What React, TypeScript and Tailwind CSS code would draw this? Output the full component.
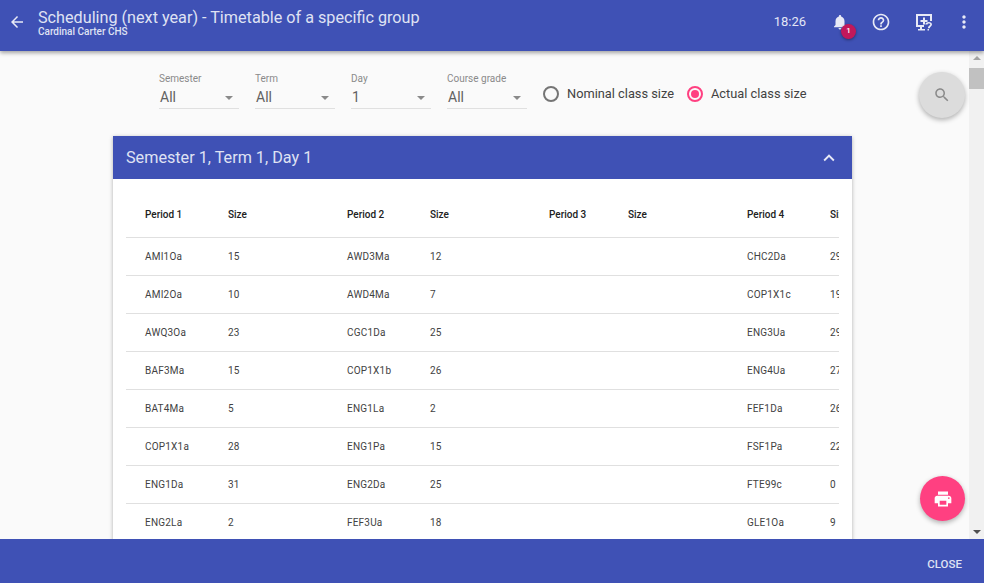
import { ReactNode } from 'react';

const rows = [
  ['AMI1Oa', '15', 'AWD3Ma', '12', 'CHC2Da', '29'],
  ['AMI2Oa', '10', 'AWD4Ma', '7', 'COP1X1c', '19'],
  ['AWQ3Oa', '23', 'CGC1Da', '25', 'ENG3Ua', '29'],
  ['BAF3Ma', '15', 'COP1X1b', '26', 'ENG4Ua', '27'],
  ['BAT4Ma', '5', 'ENG1La', '2', 'FEF1Da', '26'],
  ['COP1X1a', '28', 'ENG1Pa', '15', 'FSF1Pa', '22'],
  ['ENG1Da', '31', 'ENG2Da', '25', 'FTE99c', '0'],
  ['ENG2La', '2', 'FEF3Ua', '18', 'GLE1Oa', '9'],
  ['ENG2Pa', '20', 'FIF1Da', '24', 'GLS1Oa', '12'],
];

const filters = [
  { label: 'Semester', value: 'All' },
  { label: 'Term', value: 'All' },
  { label: 'Day', value: '1' },
  { label: 'Course grade', value: 'All' },
];

function Icon({ d, className }: { d: string; className: string }) {
  return (
    <svg viewBox="0 0 24 24" fill="currentColor" className={className}>
      <path d={d} />
    </svg>
  );
}

function Cell({ w, children, head }: { w: string; children?: ReactNode; head?: boolean }) {
  return (
    <div className={`${w} shrink-0 pl-[19px] ${head ? 'font-medium text-[#212121]' : 'tracking-[0.2px] text-[#424242]'}`}>
      {children}
    </div>
  );
}

function Row({ cells, head }: { cells: string[]; head?: boolean }) {
  return (
    <div className={`flex w-[800px] items-center border-b border-[#e0e0e0] text-[10px] ${head ? 'h-[59px] pt-[12px]' : 'h-[38px]'}`}>
      <Cell w="w-[83px]" head={head}>{cells[0]}</Cell>
      <Cell w="w-[119px]" head={head}>{cells[1]}</Cell>
      <Cell w="w-[83px]" head={head}>{cells[2]}</Cell>
      <Cell w="w-[119px]" head={head}>{cells[3]}</Cell>
      <Cell w="w-[79px]" head={head}>{head ? 'Period 3' : ''}</Cell>
      <Cell w="w-[119px]" head={head}>{head ? 'Size' : ''}</Cell>
      <Cell w="w-[83px]" head={head}>{cells[4]}</Cell>
      <Cell w="w-[115px]" head={head}>{cells[5]}</Cell>
    </div>
  );
}

export default function App() {
  return (
    <div className="relative flex h-[583px] w-[984px] flex-col overflow-hidden bg-[#fafafa] font-['Roboto',sans-serif]">
      <header className="relative z-10 flex h-[51px] shrink-0 items-center bg-[#3f51b5] pr-[10px] text-white shadow-[0_2px_4px_rgba(0,0,0,0.35)]">
        <Icon d="M20 11H7.83l5.59-5.59L12 4l-8 8 8 8 1.41-1.41L7.83 13H20v-2z" className="ml-[8px] mb-[8px] h-[18px] w-[18px] text-[#e8eaf6]" />
        <div className="ml-[12px] mb-[7px] flex-1 text-[#dfe2f3]">
          <div className="text-[16.2px] leading-[20px]">Scheduling (next year) - Timetable of a specific group</div>
          <div className="-mt-[1px] text-[10px] font-medium leading-[9px]">Cardinal Carter CHS</div>
        </div>
        <span className="mr-[25px] mb-[7px] text-[13px] text-[#e3e6f5]">18:26</span>
        <div className="relative mr-[22px] mb-[8px]">
          <Icon d="M12 22c1.1 0 2-.9 2-2h-4c0 1.1.89 2 2 2zm6-6v-5c0-3.07-1.64-5.64-4.5-6.32V4c0-.83-.67-1.5-1.5-1.5s-1.5.67-1.5 1.5v.68C7.63 5.36 6 7.92 6 11v5l-2 2v1h16v-1l-2-2z" className="h-[18px] w-[18px] text-[#e8eaf6]" />
          <span className="absolute left-[10px] top-[11px] flex h-[15px] w-[15px] items-center justify-center rounded-full bg-[#c2185b] text-[8px] font-medium text-white shadow-[0_1px_3px_rgba(0,0,0,0.4)]">1</span>
        </div>
        <Icon d="M11 18h2v-2h-2v2zm1-16C6.48 2 2 6.48 2 12s4.48 10 10 10 10-4.48 10-10S17.52 2 12 2zm0 18c-4.41 0-8-3.59-8-8s3.59-8 8-8 8 3.59 8 8-3.59 8-8 8zm0-14c-2.21 0-4 1.79-4 4h2c0-1.1.9-2 2-2s2 .9 2 2c0 2-3 1.75-3 5h2c0-2.25 3-2.5 3-5 0-2.21-1.79-4-4-4z" className="mr-[23px] mb-[8px] h-[20px] w-[20px] text-[#e8eaf6]" />
        <svg viewBox="0 0 20 20" className="mr-[20px] mb-[8px] h-[20px] w-[20px] text-[#e8eaf6]" fill="currentColor">
          <path d="M2 2h16v7h-2V4H4v9h6v2H8v2h3v1.500H4V17h2v-2H2z" />
          <path d="M9 5.500h2V8h2.500v2H11v2.500H9V10H6.500V8H9z" />
          <path d="M13.500 17h1.500v1.500h-1.500zM14.800 10c1.900 0 3.200 1 3.200 2.500 0 1.800-2.200 2-2.200 3.700h-1.800c0-2.500 2.200-2.500 2.200-3.700 0-.5-.6-.9-1.300-.9-.8 0-1.300.4-1.300 1H11.300c0-1.500 1.500-2.600 3.500-2.600z" />
        </svg>
        <Icon d="M12 8c1.100 0 2-.9 2-2s-.9-2-2-2-2 .9-2 2 .9 2 2 2zm0 2c-1.100 0-2 .9-2 2s.9 2 2 2 2-.9 2-2-.9-2-2-2zm0 6c-1.100 0-2 .9-2 2s.9 2 2 2 2-.9 2-2-.9-2-2-2z" className="mb-[8px] h-[20px] w-[20px] text-[#e8eaf6]" />
      </header>

      <div className="flex min-h-0 flex-1">
        <main className="min-w-0 flex-1 overflow-hidden">
          <div className="ml-[159px] mt-[22px] flex h-[63px] items-start">
            {filters.map((f) => (
              <div key={f.label} className="mr-[16px] w-[80px] border-b border-[#e0e0e0]">
                <div className="text-[10px] leading-[12px] text-[#8a8a8a]">{f.label}</div>
                <div className="flex h-[23px] items-center pl-[1px] pt-[2px] text-[14px] text-[#616161]">
                  <span className="flex-1">{f.value}</span>
                  <span className="mr-[6px] h-0 w-0 border-x-[4px] border-t-[4px] border-x-transparent border-t-[#8a8a8a]" />
                </div>
              </div>
            ))}
            <div className="mt-[11px] flex items-center text-[12.8px] text-[#424242]">
              <span className="h-[16px] w-[16px] rounded-full border-2 border-[#757575]" />
              <span className="ml-[8px]">Nominal class size</span>
              <span className="ml-[13px] flex h-[16px] w-[16px] items-center justify-center rounded-full border-2 border-[#ff4081]">
                <span className="h-[8px] w-[8px] rounded-full bg-[#ff4081]" />
              </span>
              <span className="ml-[8px]">Actual class size</span>
            </div>
          </div>

          <section className="ml-[113px] w-[739px] bg-white shadow-[0_1px_4px_rgba(0,0,0,0.3)]">
            <div className="flex h-[43px] items-center justify-between bg-[#3f51b5] pl-[13px] pr-[12px] text-[16.2px] text-[#dfe2f3]">
              <span className="pt-[2px]">Semester 1, Term 1, Day 1</span>
              <Icon d="M12 8l-6 6 1.410 1.410L12 10.830l4.590 4.580L18 14z" className="h-[22px] w-[22px] text-[#e8eaf6]" />
            </div>
            <div className="mx-[13px] overflow-hidden">
              <Row head cells={['Period 1', 'Size', 'Period 2', 'Size', 'Period 4', 'Size']} />
              {rows.map((r) => (
                <Row key={r[0]} cells={r} />
              ))}
            </div>
          </section>
        </main>

        <div className="flex w-[15px] shrink-0 flex-col items-center bg-[#f1f1f1]">
          <span className="mt-[5px] h-0 w-0 border-x-[4px] border-b-[4px] border-x-transparent border-b-[#a3a3a3]" />
          <div className="mt-[8px] h-[21px] w-full bg-[#c1c1c1]" />
          <div className="flex-1" />
          <span className="mb-[5px] h-0 w-0 border-x-[4px] border-t-[4px] border-x-transparent border-t-[#505050]" />
        </div>
      </div>

      <footer className="relative z-10 flex h-[44px] shrink-0 items-center justify-end bg-[#3f51b5] pr-[22px] pt-[7px] text-[11.5px] font-medium text-[#dfe2f3]">
        CLOSE
      </footer>

      <button className="absolute left-[919px] top-[72px] z-20 flex h-[46px] w-[46px] items-center justify-center rounded-full bg-[#dcdcdc] text-[#8a8a8a] shadow-[0_2px_5px_rgba(0,0,0,0.3)]">
        <Icon d="M15.500 14h-.79l-.28-.27C15.410 12.590 16 11.110 16 9.500 16 5.910 13.090 3 9.500 3S3 5.910 3 9.500 5.910 16 9.500 16c1.610 0 3.090-.59 4.230-1.570l.27.28v.79l5 4.990L20.490 19l-4.990-5zm-6 0C7.010 14 5 11.990 5 9.500S7.010 5 9.500 5 14 7.010 14 9.500 11.990 14 9.500 14z" className="h-[18px] w-[18px]" />
      </button>
      <button className="absolute left-[920px] top-[476px] z-20 flex h-[45px] w-[45px] items-center justify-center rounded-full bg-[#ff4081] text-white shadow-[0_2px_5px_rgba(0,0,0,0.3)]">
        <Icon d="M19 8H5c-1.660 0-3 1.340-3 3v6h4v4h12v-4h4v-6c0-1.660-1.340-3-3-3zm-3 11H8v-5h8v5zm3-7c-.55 0-1-.45-1-1s.45-1 1-1 1 .45 1 1-.45 1-1 1zm-1-9H6v4h12V3z" className="h-[20px] w-[20px]" />
      </button>
    </div>
  );
}
